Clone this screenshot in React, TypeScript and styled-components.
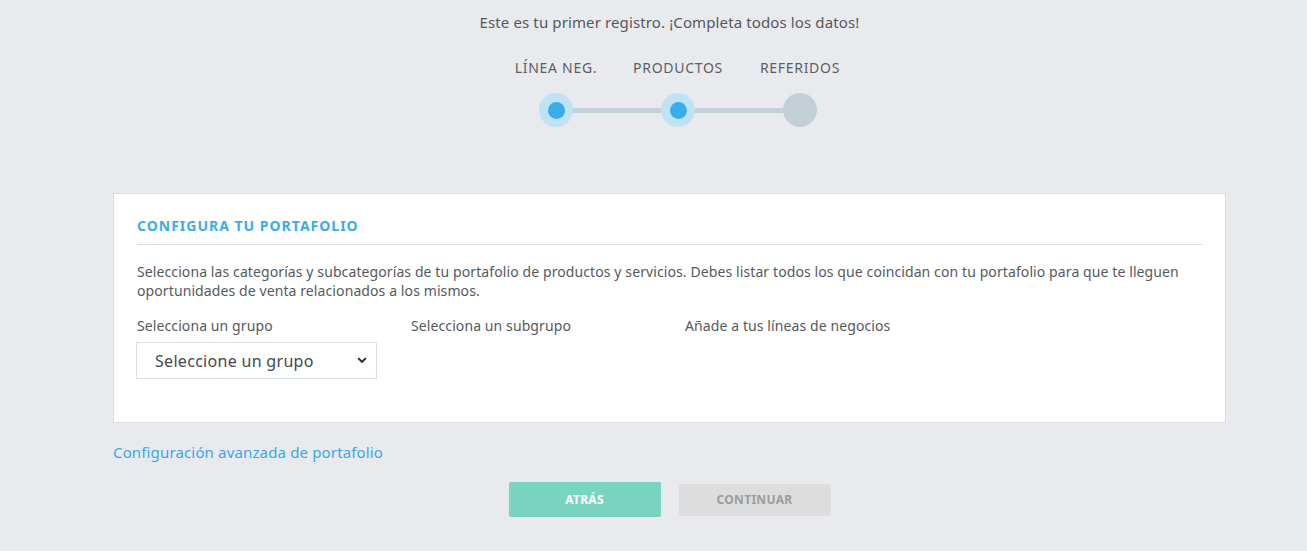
import React from "react";
import styled, { createGlobalStyle } from "styled-components";

const Global = createGlobalStyle`
  html, body { margin: 0; padding: 0; background: #e9eaee; }
  body { font-family: "Noto Sans", "Open Sans", sans-serif; color: #555a5f; }
  * { box-sizing: border-box; }
`;

const Page = styled.div`
  width: 1113px;
  margin-left: 113px;
  padding-top: 12px;
  padding-bottom: 34px;
  display: flex;
  flex-direction: column;
`;

const Intro = styled.div`
  text-align: center;
  font-size: 15px;
  line-height: 20px;
  letter-spacing: 0.12px;
  color: #54585d;
`;

const Stepper = styled.div`
  display: flex;
  justify-content: center;
  margin-top: 27px;
  margin-left: 17px;
`;

const Step = styled.div`
  width: 122px;
  display: flex;
  flex-direction: column;
  align-items: center;
`;

const StepLabel = styled.div`
  font-size: 14px;
  line-height: 18px;
  letter-spacing: 0.7px;
  color: #5b5f64;
  text-transform: uppercase;
  white-space: nowrap;
`;

const Track = styled.div<{ $first?: boolean; $last?: boolean }>`
  margin-top: 16px;
  width: 100%;
  height: 34px;
  display: flex;
  align-items: center;
  justify-content: center;
  background: linear-gradient(
    to right,
    ${(p) => (p.$first ? "transparent" : "#c5d1d8")} 0 50%,
    ${(p) => (p.$last ? "transparent" : "#c5d1d8")} 50% 100%
  );
  background-size: 100% 5px;
  background-repeat: no-repeat;
  background-position: center;
`;

const Dot = styled.div<{ $active?: boolean }>`
  width: 34px;
  height: 34px;
  border-radius: 50%;
  background: ${(p) => (p.$active ? "#bfe3f5" : "#c4cfd6")};
  display: flex;
  align-items: center;
  justify-content: center;
  &::after {
    content: "";
    display: ${(p) => (p.$active ? "block" : "none")};
    width: 17px;
    height: 17px;
    border-radius: 50%;
    background: #38ade9;
  }
`;

const Card = styled.section`
  margin-top: 66px;
  background: #ffffff;
  border: 1px solid #dadde2;
  padding: 23px 23px 43px 23px;
`;

const CardTitle = styled.h2`
  margin: 0;
  font-size: 14px;
  line-height: 18px;
  font-weight: 700;
  color: #38ade9;
  letter-spacing: 1px;
`;

const Rule = styled.hr`
  margin: 9px 0 0 0;
  border: 0;
  border-top: 1px solid #d5dbe0;
`;

const Text = styled.p`
  margin: 17px 0 0 0;
  font-size: 14px;
  line-height: 19px;
  letter-spacing: 0.1px;
  color: #55595e;
`;

const Columns = styled.div`
  margin-top: 17px;
  display: grid;
  grid-template-columns: repeat(4, 274px);
`;

const Field = styled.div`
  display: flex;
  flex-direction: column;
`;

const Label = styled.label`
  font-size: 14px;
  line-height: 18px;
  letter-spacing: 0.1px;
  color: #55595e;
`;

const SelectWrap = styled.div`
  position: relative;
  margin-top: 7px;
  margin-left: -1px;
  width: 241px;
`;

const Select = styled.select`
  appearance: none;
  -webkit-appearance: none;
  width: 100%;
  height: 37px;
  border: 1px solid #d8e1ea;
  border-radius: 0;
  background: #fff;
  padding: 0 30px 0 18px;
  font-family: inherit;
  font-size: 16px;
  letter-spacing: 0.3px;
  color: #44484d;
  outline: none;
`;

const Chevron = styled.svg`
  position: absolute;
  right: 10px;
  top: 15px;
  width: 10px;
  height: 7px;
  pointer-events: none;
`;

const AdvancedLink = styled.a`
  margin-top: 19px;
  font-size: 15px;
  line-height: 20px;
  letter-spacing: 0.15px;
  color: #38a7e4;
  text-decoration: none;
  align-self: flex-start;
  cursor: pointer;
`;

const Actions = styled.div`
  margin-top: 20px;
  display: flex;
  justify-content: center;
  align-items: center;
  gap: 18px;
`;

const Button = styled.button<{ $primary?: boolean }>`
  width: 152px;
  height: ${(p) => (p.$primary ? "35px" : "32px")};
  border: 0;
  border-radius: 2px;
  background: ${(p) => (p.$primary ? "#79d5bf" : "#dddddd")};
  color: ${(p) => (p.$primary ? "#ffffff" : "#9c9c9c")};
  font-family: inherit;
  font-size: 12px;
  font-weight: 700;
  letter-spacing: 0.3px;
  text-transform: uppercase;
  cursor: pointer;
`;

const steps = [
  { label: "Línea neg.", active: true },
  { label: "Productos", active: true },
  { label: "Referidos", active: false },
];

export default function App() {
  return (
    <>
      <Global />
      <Page>
        <Intro>Este es tu primer registro. ¡Completa todos los datos!</Intro>
        <Stepper>
          {steps.map((s, i) => (
            <Step key={s.label}>
              <StepLabel>{s.label}</StepLabel>
              <Track $first={i === 0} $last={i === steps.length - 1}>
                <Dot $active={s.active} />
              </Track>
            </Step>
          ))}
        </Stepper>
        <Card>
          <CardTitle>CONFIGURA TU PORTAFOLIO</CardTitle>
          <Rule />
          <Text>
            Selecciona las categorías y subcategorías de tu portafolio de productos y servicios. Debes listar
            todos los que coincidan con tu portafolio para que te lleguen oportunidades de venta relacionados a
            los mismos.
          </Text>
          <Columns>
            <Field>
              <Label>Selecciona un grupo</Label>
              <SelectWrap>
                <Select defaultValue="">
                  <option value="">Seleccione un grupo</option>
                </Select>
                <Chevron viewBox="0 0 10 7">
                  <path d="M1.2 1.2 L5 5 L8.8 1.2" fill="none" stroke="#222" strokeWidth="1.8" />
                </Chevron>
              </SelectWrap>
            </Field>
            <Field>
              <Label>Selecciona un subgrupo</Label>
            </Field>
            <Field>
              <Label>Añade a tus líneas de negocios</Label>
            </Field>
          </Columns>
        </Card>
        <AdvancedLink>Configuración avanzada de portafolio</AdvancedLink>
        <Actions>
          <Button $primary>Atrás</Button>
          <Button>Continuar</Button>
        </Actions>
      </Page>
    </>
  );
}
